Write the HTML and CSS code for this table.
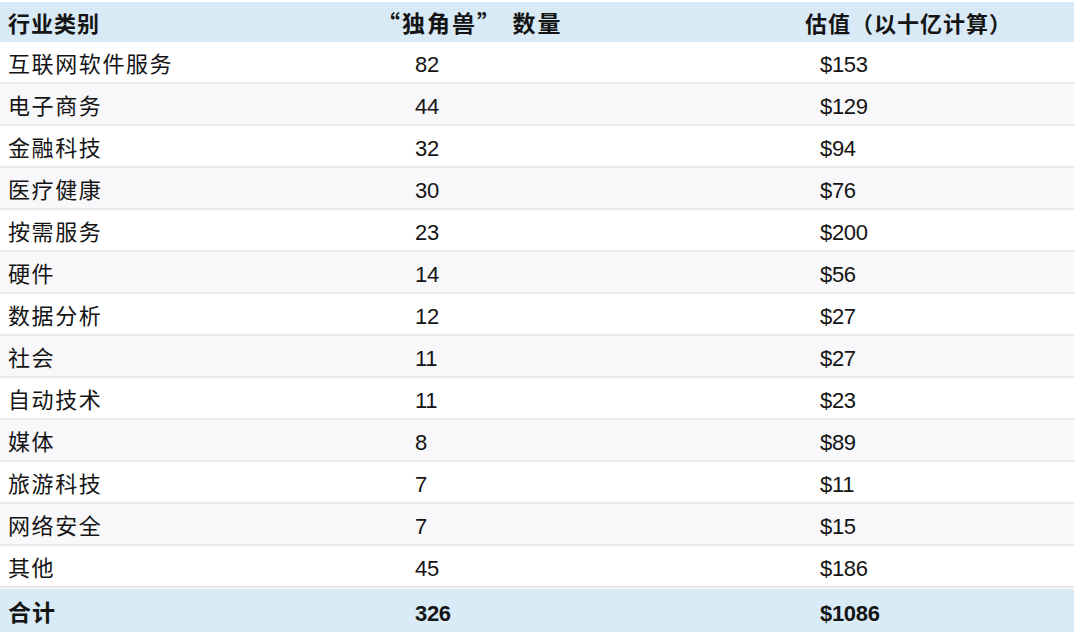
FILE: index.html
```html
<!DOCTYPE html>
<html lang="zh-CN">
<head>
<meta charset="utf-8">
<title>独角兽行业分布</title>
<link rel="stylesheet" href="styles.css">
</head>
<body>
<div class="table">
  <div class="row head">
    <div class="c1">行业类别</div>
    <div class="c2"><span class="cjk">“独角兽”</span> <span class="cjk">数量</span></div>
    <div class="c3">估值（以十亿计算）</div>
  </div>
  <div class="row"><div class="c1">互联网软件服务</div><div class="c2">82</div><div class="c3">$153</div></div>
  <div class="row alt"><div class="c1">电子商务</div><div class="c2">44</div><div class="c3">$129</div></div>
  <div class="row"><div class="c1">金融科技</div><div class="c2">32</div><div class="c3">$94</div></div>
  <div class="row alt"><div class="c1">医疗健康</div><div class="c2">30</div><div class="c3">$76</div></div>
  <div class="row"><div class="c1">按需服务</div><div class="c2">23</div><div class="c3">$200</div></div>
  <div class="row alt"><div class="c1">硬件</div><div class="c2">14</div><div class="c3">$56</div></div>
  <div class="row"><div class="c1">数据分析</div><div class="c2">12</div><div class="c3">$27</div></div>
  <div class="row alt"><div class="c1">社会</div><div class="c2">11</div><div class="c3">$27</div></div>
  <div class="row"><div class="c1">自动技术</div><div class="c2">11</div><div class="c3">$23</div></div>
  <div class="row alt"><div class="c1">媒体</div><div class="c2">8</div><div class="c3">$89</div></div>
  <div class="row"><div class="c1">旅游科技</div><div class="c2">7</div><div class="c3">$11</div></div>
  <div class="row alt"><div class="c1">网络安全</div><div class="c2">7</div><div class="c3">$15</div></div>
  <div class="row"><div class="c1">其他</div><div class="c2">45</div><div class="c3">$186</div></div>
  <div class="row total"><div class="c1">合计</div><div class="c2">326</div><div class="c3">$1086</div></div>
</div>
</body>
</html>
```

FILE: styles.css
```css
* { box-sizing: border-box; }
html, body { margin: 0; padding: 0; background: #ffffff; }
body {
  font-family: "Liberation Sans", "Noto Sans CJK SC", sans-serif;
  font-size: 22px;
  color: #141414;
}
.cjk { font-family: "Noto Sans CJK SC", sans-serif; }
.table {
  width: 1074px;
  padding-top: 2px;
}
.row {
  display: grid;
  grid-template-columns: 390px 415px 1fr;
  align-items: center;
  height: 42px;
  border-bottom: 2px solid #e9e8ec;
  background: #ffffff;
}
.row.alt { background: #f8f7fa; }
.c1 { padding-left: 8px; letter-spacing: 1.6px; }
.c2 { padding-left: 25px; padding-top: 6px; letter-spacing: -0.3px; }
.c3 { padding-left: 15px; padding-top: 6px; letter-spacing: -0.3px; }
.head {
  height: 40px;
  background: #d8eaf5;
  border-bottom: none;
  font-weight: bold;
}
.head .c1 { letter-spacing: 1px; }
.head .c2 {
  padding-left: 0;
  margin-left: -13px;
  padding-top: 0;
  font-size: 23px;
  letter-spacing: 2px;
  word-spacing: 2px;
}
.head .c3 { padding-left: 0; padding-top: 0; letter-spacing: 1px; }
.total {
  height: 43px;
  margin-top: 1px;
  background: #d9ebf6;
  border-bottom: none;
  font-weight: bold;
}
.total .c1 { letter-spacing: 1px; font-size: 23px; }
```
